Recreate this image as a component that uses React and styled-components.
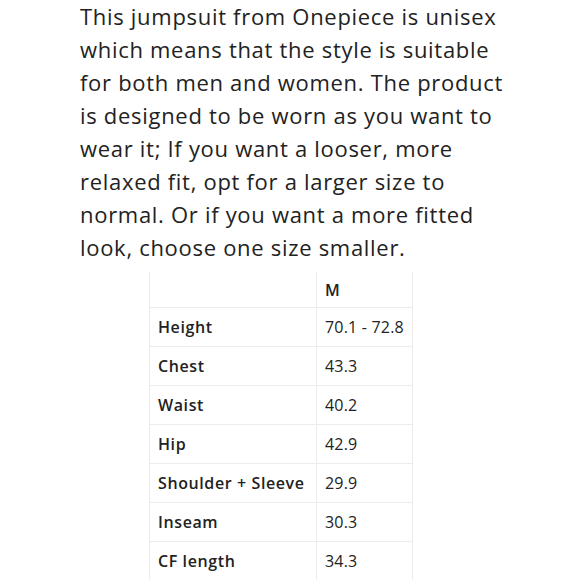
import React from "react";
import styled, { createGlobalStyle } from "styled-components";

const GlobalStyle = createGlobalStyle`
  html, body {
    margin: 0;
    padding: 0;
    background: #ffffff;
  }
  body {
    font-family: 'Open Sans', 'Lato', sans-serif;
    color: #222222;
  }
`;

const Page = styled.div`
  width: 580px;
  height: 580px;
  overflow: hidden;
  padding: 0 0 0 80px;
  box-sizing: border-box;
`;

const Description = styled.p`
  margin: 0;
  font-size: 22px;
  line-height: 33px;
  letter-spacing: 0.7px;
  color: #222222;
  white-space: nowrap;
`;

const SizeTable = styled.table`
  margin: 8px 0 0 69px;
  border-collapse: collapse;
  font-size: 16px;
  color: #222222;
`;

const Cell = styled.td`
  height: 38px;
  padding: 0 8px;
  border-left: 1px solid #ececec;
  border-right: 1px solid #ececec;
  border-bottom: 1px solid #ececec;
  font-weight: ${(p) => (p.$label ? 600 : 400)};
  width: ${(p) => (p.$label ? "150px" : "76px")};
  letter-spacing: ${(p) => (p.$label ? "0.6px" : "0.2px")};
  white-space: nowrap;
`;

const HeadCell = styled(Cell).attrs({ as: "th" })`
  height: 35px;
  text-align: left;
  font-weight: 600;
`;

const lines = [
  "This jumpsuit from Onepiece is unisex",
  "which means that the style is suitable",
  "for both men and women. The product",
  "is designed to be worn as you want to",
  "wear it; If you want a looser, more",
  "relaxed fit, opt for a larger size to",
  "normal. Or if you want a more fitted",
  "look, choose one size smaller.",
];

const rows = [
  ["Height", "70.1 - 72.8"],
  ["Chest", "43.3"],
  ["Waist", "40.2"],
  ["Hip", "42.9"],
  ["Shoulder + Sleeve", "29.9"],
  ["Inseam", "30.3"],
  ["CF length", "34.3"],
];

export default function App() {
  return (
    <Page>
      <GlobalStyle />
      <Description>
        {lines.map((line, i) => (
          <React.Fragment key={i}>
            {line}
            {i < lines.length - 1 && <br />}
          </React.Fragment>
        ))}
      </Description>
      <SizeTable>
        <thead>
          <tr>
            <HeadCell $label></HeadCell>
            <HeadCell>M</HeadCell>
          </tr>
        </thead>
        <tbody>
          {rows.map(([label, value]) => (
            <tr key={label}>
              <Cell $label>{label}</Cell>
              <Cell>{value}</Cell>
            </tr>
          ))}
        </tbody>
      </SizeTable>
    </Page>
  );
}
